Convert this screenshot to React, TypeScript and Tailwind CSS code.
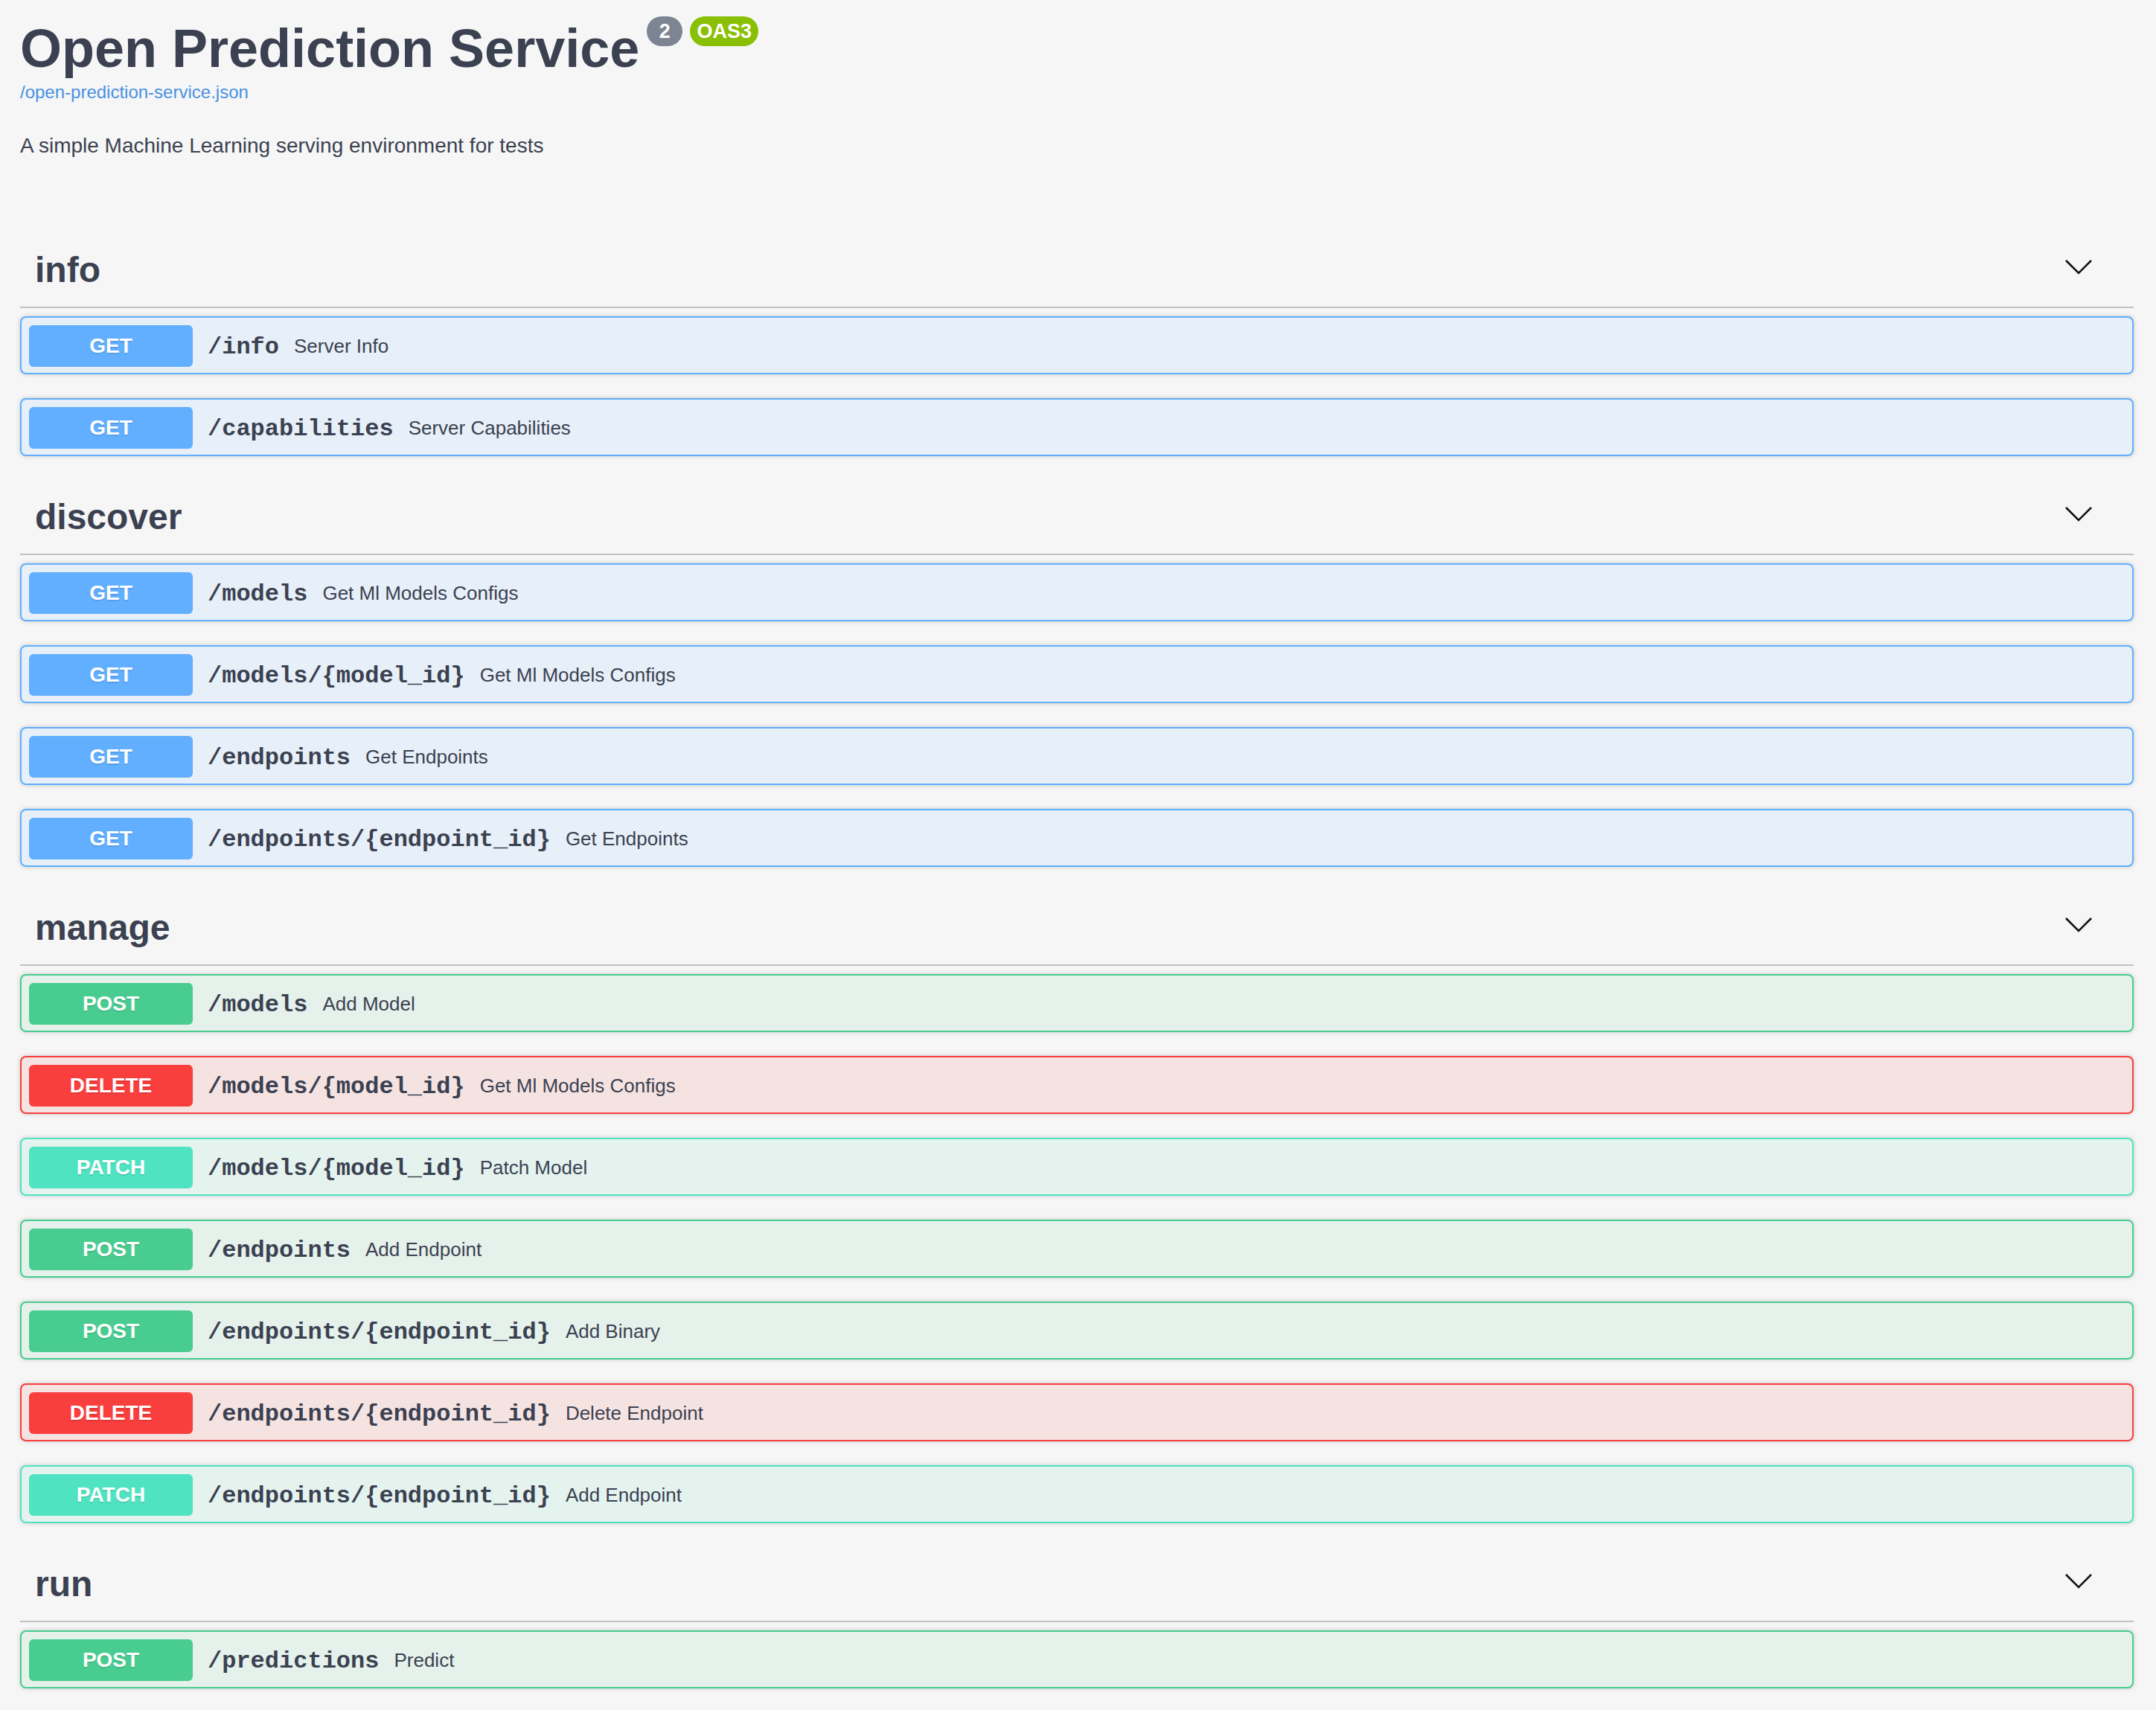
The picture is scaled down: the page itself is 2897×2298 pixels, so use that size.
import React from 'react';

type Method = 'GET' | 'POST' | 'DELETE' | 'PATCH';

interface Operation {
  method: Method;
  path: string;
  summary: string;
}

interface TagSection {
  name: string;
  operations: Operation[];
}

const sections: TagSection[] = [
  {
    name: 'info',
    operations: [
      { method: 'GET', path: '/info', summary: 'Server Info' },
      { method: 'GET', path: '/capabilities', summary: 'Server Capabilities' },
    ],
  },
  {
    name: 'discover',
    operations: [
      { method: 'GET', path: '/models', summary: 'Get Ml Models Configs' },
      { method: 'GET', path: '/models/{model_id}', summary: 'Get Ml Models Configs' },
      { method: 'GET', path: '/endpoints', summary: 'Get Endpoints' },
      { method: 'GET', path: '/endpoints/{endpoint_id}', summary: 'Get Endpoints' },
    ],
  },
  {
    name: 'manage',
    operations: [
      { method: 'POST', path: '/models', summary: 'Add Model' },
      { method: 'DELETE', path: '/models/{model_id}', summary: 'Get Ml Models Configs' },
      { method: 'PATCH', path: '/models/{model_id}', summary: 'Patch Model' },
      { method: 'POST', path: '/endpoints', summary: 'Add Endpoint' },
      { method: 'POST', path: '/endpoints/{endpoint_id}', summary: 'Add Binary' },
      { method: 'DELETE', path: '/endpoints/{endpoint_id}', summary: 'Delete Endpoint' },
      { method: 'PATCH', path: '/endpoints/{endpoint_id}', summary: 'Add Endpoint' },
    ],
  },
  {
    name: 'run',
    operations: [{ method: 'POST', path: '/predictions', summary: 'Predict' }],
  },
];

const rowStyles: Record<Method, { row: string; badge: string }> = {
  GET: { row: 'border-[#61affe] bg-[#e7eff8]', badge: 'bg-[#61affe]' },
  POST: { row: 'border-[#49cc90] bg-[#e5f1eb]', badge: 'bg-[#49cc90]' },
  DELETE: { row: 'border-[#f93e3e] bg-[#f5e3e2]', badge: 'bg-[#f93e3e]' },
  PATCH: { row: 'border-[#50e3c2] bg-[#e5f3ef]', badge: 'bg-[#50e3c2]' },
};

const Chevron = () => (
  <svg width="40" height="40" viewBox="0 0 40 40" fill="none">
    <polyline points="3,7 20,24 37,7" stroke="#111" strokeWidth="2.6" />
  </svg>
);

const OperationRow = ({ op }: { op: Operation }) => {
  const style = rowStyles[op.method];
  return (
    <div
      className={`mb-[32px] flex h-[78px] items-center rounded-[8px] border-2 pl-[10px] shadow-[0_0_6px_rgba(0,0,0,0.19)] ${style.row}`}
    >
      <span
        className={`mt-[1px] flex h-[56px] w-[220px] shrink-0 items-center justify-center rounded-[6px] text-[28px] font-bold text-white [text-shadow:0_2px_0_rgba(0,0,0,0.1)] ${style.badge}`}
      >
        {op.method}
      </span>
      <span className="px-[20px] pt-[5px] font-['Liberation_Mono',monospace] text-[32px] font-bold text-[#3b4151]">
        {op.path}
      </span>
      <span className="pt-[2px] text-[26px] text-[#3b4151]">{op.summary}</span>
    </div>
  );
};

export default function App() {
  return (
    <div className="min-h-screen bg-[#f5f6f5] font-['Liberation_Sans',Arial,sans-serif] text-[#3b4151]">
      <div className="pl-[27px] pr-[30px] pt-[25px] pb-[2px]">
        {/* header */}
        <div className="flex items-start">
          <h1 className="text-[72px] leading-[80px] font-bold">Open Prediction Service</h1>
          <span className="ml-[10px] -mt-[3px] flex h-[40px] w-[48px] items-center justify-center rounded-full bg-[#7d8492] text-[27px] font-bold text-white">
            2
          </span>
          <span className="ml-[10px] -mt-[3px] flex h-[40px] w-[92px] items-center justify-center rounded-full bg-[#89bf04] text-[27px] font-bold text-white">
            OAS3
          </span>
        </div>
        <a className="mt-[5px] block text-[24px] leading-[28px] text-[#4990e2]">/open-prediction-service.json</a>
        <p className="mt-[37px] text-[28px] leading-[42px]">A simple Machine Learning serving environment for tests</p>

        <div className="mt-[96px]">
          {sections.map((section) => (
            <div key={section.name} className="flex flex-col">
              <div className="mb-[11px] flex h-[101px] items-center justify-between border-b-2 border-[#bfc1c5] pl-[20px] pr-[54px]">
                <span className="text-[48px] font-bold">{section.name}</span>
                <Chevron />
              </div>
              {section.operations.map((op, i) => (
                <OperationRow key={i} op={op} />
              ))}
            </div>
          ))}
        </div>
      </div>
    </div>
  );
}
